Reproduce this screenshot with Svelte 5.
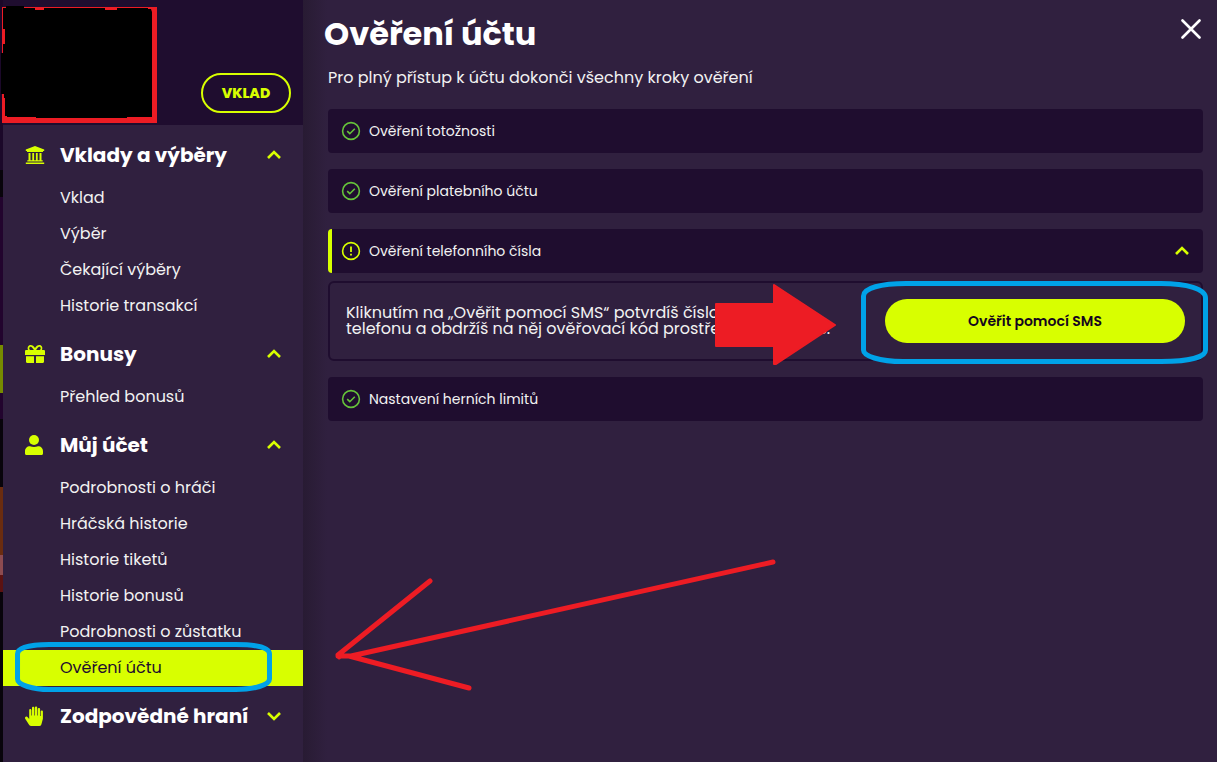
<script>
  const sections = [
    { title: 'Vklady a výběry', icon: 'bank', open: true, items: ['Vklad', 'Výběr', 'Čekající výběry', 'Historie transakcí'] },
    { title: 'Bonusy', icon: 'gift', open: true, items: ['Přehled bonusů'] },
    {
      title: 'Můj účet',
      icon: 'user',
      open: true,
      items: ['Podrobnosti o hráči', 'Hráčská historie', 'Historie tiketů', 'Historie bonusů', 'Podrobnosti o zůstatku', 'Ověření účtu']
    },
    { title: 'Zodpovědné hraní', icon: 'hand', open: false, items: [] }
  ];
  const current = 'Ověření účtu';
  const steps = [
    { title: 'Ověření totožnosti', done: true },
    { title: 'Ověření platebního účtu', done: true },
    { title: 'Ověření telefonního čísla', done: false },
    { title: 'Nastavení herních limitů', done: true }
  ];
</script>

{#snippet chevron(up)}
  <svg class="chevron" class:up width="16" height="10" viewBox="0 0 16 10" aria-hidden="true">
    <path d="M2 2l6 6 6-6" fill="none" stroke="currentColor" stroke-width="2.6" />
  </svg>
{/snippet}

{#snippet menuIcon(name)}
  <svg class="menu-icon" width="20" height="20" viewBox="0 0 20 20" fill="currentColor" aria-hidden="true">
    {#if name === 'bank'}
      <path d="M10 1l9.200 3.500v1.500h-1.200v1H2V6H.8V4.500zM3.500 8h2v7.200h9V8h2v7.200h1.200v1.300H2.300v-1.300h1.200zM7.300 8h1.800v7.200H7.300zM10.900 8h1.800v7.200h-1.800zM.8 17.400h18.400V19H.8z" />
    {:else if name === 'gift'}
      <path d="M0 7.300C0 6.500.6 6 1.300 6H3C2 3.500 3.200 1 5.600 1 7.600 1 8.800 2.300 10 4c1.200-1.700 2.400-3 4.400-3C16.800 1 18 3.500 17 6h1.700c.7 0 1.300.5 1.300 1.300V11H0zM5.600 2.800c-1.600 0-1.900 2.800-.2 3.200h3.500C7.600 4.100 6.900 2.800 5.600 2.800zm8.800 0c-1.300 0-2 1.300-3.300 3.200h3.500c1.700-.4 1.400-3.200-.2-3.200zM1 12.200h8V19H2.200C1.400 19 1 18.500 1 17.800zm10 0h8v5.600c0 .7-.4 1.200-1.200 1.200H11z" />
    {:else if name === 'user'}
      <circle cx="9" cy="5" r="5" />
      <path d="M5 11.200c2.500 1.100 5.500 1.100 8 0 3 0 5 2.100 5 5v2.300c0 .9-.6 1.500-1.500 1.500h-15C.6 20 0 19.400 0 18.500v-2.300c0-2.900 2-5 5-5z" />
    {:else}
      <path d="M4.200 19l-4-6.200c-.5-.8-.2-1.700.5-2.100.7-.4 1.500-.2 2 .5l1.500 1.900V4c0-1.500 2.200-1.500 2.200 0v5.500h.6V1.800c0-1.500 2.300-1.500 2.300 0v7.700h.6v-8c0-1.500 2.300-1.500 2.300 0v8h.6V3c0-1.500 2.300-1.500 2.300 0v7h.6V5.500c0-1.400 2.200-1.400 2.200 0v7.300l-1.400 5.200c-.3 1.300-.8 2-2 2H6.200c-.9 0-1.500-.3-2-1z" />
    {/if}
  </svg>
{/snippet}

<div class="page">
  <div class="backdrop" aria-hidden="true"></div>
  <aside>
    <header>
      <div class="redacted" aria-hidden="true">
        <svg width="155" height="116" viewBox="0 0 155 116">
          <path d="M0 0H155V116H0Z" fill="#ed1c24" />
          <path d="M4-1H22V1H33V3H42V1H103V3H115V1H146V2H149L150 5V110H125V111H34V110H5V109H3V91H2V87H-1V46H1V37H3V22H1V1H4Z" fill="#000" />
        </svg>
      </div>
      <button class="deposit">VKLAD</button>
    </header>
    <nav>
      {#each sections as section}
        <section>
          <button class="heading" aria-expanded={section.open}>
            {@render menuIcon(section.icon)}
            <span>{section.title}</span>
            {@render chevron(section.open)}
          </button>
          {#if section.open}
            <ul>
              {#each section.items as item}
                <li>
                  <a href="#menu" class:active={item === current}>{item}</a>
                  {#if item === current}
                    <svg class="nav-ring" viewBox="0 0 256 50" preserveAspectRatio="none" aria-hidden="true">
                      <path d="M2.500 12C2.500 5 18 2.500 34 2.500H220C238 2.500 253.500 5 253.500 12V37C253.500 43 238 47.500 220 47.500H34C18 47.500 2.500 43 2.500 37Z" />
                    </svg>
                  {/if}
                </li>
              {/each}
            </ul>
          {/if}
        </section>
      {/each}
    </nav>
  </aside>

  <main>
    <div class="title-row">
      <h1>Ověření účtu</h1>
      <button class="close" aria-label="Zavřít">
        <svg width="20" height="20" viewBox="0 0 20 20" aria-hidden="true">
          <path d="M1.500 1.500l17 17M18.500 1.500l-17 17" stroke="#fff" stroke-width="2.600" stroke-linecap="round" />
        </svg>
      </button>
    </div>
    <p class="intro">Pro plný přístup k účtu dokonči všechny kroky ověření</p>

    <div class="steps">
      {#each steps as step}
        <div class="step">
          <button class="step-head" class:pending={!step.done} aria-expanded={!step.done}>
            <svg class="status" width="20" height="20" viewBox="0 0 20 20" fill="none" stroke="currentColor" aria-hidden="true">
              <circle cx="10" cy="10" r="8.400" stroke-width="1.600" />
              {#if step.done}
                <path d="M6.200 10.200l2.600 2.500 5-5" stroke-width="1.600" />
              {:else}
                <path d="M10 5.500v5.500M10 12.700v1.800" stroke-width="1.800" />
              {/if}
            </svg>
            <span>{step.title}</span>
            {#if !step.done}{@render chevron(true)}{/if}
          </button>
          {#if !step.done}
            <div class="panel">
              <p>
                Kliknutím na „Ověřit pomocí SMS“ potvrdíš číslo<br />
                telefonu a obdržíš na něj ověřovací kód prostřednictvím SMS.
              </p>
              <div class="action">
                <button class="verify">Ověřit pomocí SMS</button>
                <svg class="block-arrow" width="122" height="84" viewBox="0 0 122 84" aria-hidden="true">
                  <path d="M1 21H59V2L120 42 61 81H59V63H1Z" fill="#ed1c24" stroke="#ed1c24" stroke-width="2" stroke-linejoin="round" />
                </svg>
                <svg class="action-ring" viewBox="0 0 348 84" preserveAspectRatio="none" aria-hidden="true">
                  <path d="M2.500 15C2.500 7 20 2.500 45 2.500H300C326 2.500 344.500 8 344.500 17V69C344.500 76 328 80.500 300 80.500H42C18 80.500 2.500 75 2.500 69Z" />
                </svg>
              </div>
            </div>
          {/if}
        </div>
      {/each}
    </div>

    <svg class="long-arrow" width="444" height="134" viewBox="0 0 444 134" fill="none" stroke="#ed1c24" stroke-width="5" stroke-linecap="round" stroke-linejoin="round" aria-hidden="true">
      <path d="M438 3L16 97M95 22L3 96L4 98M3 97H14L134 129" />
    </svg>
  </main>
</div>

<style>
  :global(body) {
    margin: 0;
    background: #30203f;
  }
  .page {
    display: flex;
    min-height: 100vh;
    background: #30203f;
    color: #f2f2f2;
    font: 400 16px/24px Poppins, Inter, "Open Sans", sans-serif;
  }
  .backdrop {
    flex: 0 0 3px;
    background: linear-gradient(
      #1b0829 0 170px, #08040b 170px 197px, #22042e 197px 345px, #768b00 345px 393px,
      #22042e 393px 419px, #08040b 419px 487px, #6a2c10 487px 555px, #8c4b50 555px 575px,
      #5b1212 575px 592px, #08040b 592px
    );
  }
  button {
    margin: 0;
    padding: 0;
    border: 0;
    background: none;
    color: inherit;
    font: inherit;
    text-align: left;
    cursor: pointer;
  }
  aside {
    position: relative;
    flex: 0 0 300px;
    background: #30203f;
  }
  header {
    display: flex;
    align-items: flex-end;
    justify-content: space-between;
    padding: 7px 12px 2px 0;
    background: #1f0d2f;
  }
  .redacted {
    width: 155px;
    height: 116px;
    margin-left: -1px;
  }
  .redacted svg {
    display: block;
    overflow: visible;
  }
  .deposit {
    box-sizing: border-box;
    width: 90px;
    height: 40px;
    margin-bottom: 10px;
    border: 2px solid #d8ff00;
    border-radius: 20px;
    color: #d8ff00;
    font-size: 14px;
    font-weight: 800;
    text-align: center;
  }
  nav {
    display: flex;
    flex-direction: column;
    gap: 6px;
    padding: 6px 0;
  }
  .heading {
    display: flex;
    align-items: center;
    width: 100%;
    height: 48px;
    padding: 0 21px 0 22px;
    color: #fff;
    font-size: 20px;
    font-weight: 700;
  }
  .heading span {
    flex: 1;
    white-space: nowrap;
  }
  .menu-icon {
    flex: none;
    margin-right: 15px;
    color: #d8ff00;
  }
  .chevron {
    flex: none;
    color: #d8ff00;
  }
  .chevron.up {
    transform: rotate(180deg);
  }
  ul {
    margin: 0;
    padding: 1px 0 0;
    list-style: none;
  }
  li {
    position: relative;
  }
  a {
    display: block;
    padding: 6px 0 6px 57px;
    color: inherit;
    text-decoration: none;
  }
  a.active {
    background: #d8ff00;
    color: #1f0d2f;
  }
  .nav-ring,
  .action-ring {
    position: absolute;
    fill: none;
    stroke: #00a2e8;
    stroke-width: 5px;
    pointer-events: none;
  }
  .nav-ring {
    top: -8px;
    left: 12px;
    width: 257px;
    height: 50px;
  }
  main {
    position: relative;
    flex: 1;
    min-width: 0;
    padding: 8px 14px 24px 25px;
    background: linear-gradient(90deg, #281b33, #30203f 24px);
  }
  .title-row {
    display: flex;
    justify-content: space-between;
    align-items: flex-start;
    margin-left: -4px;
  }
  h1 {
    margin: 0;
    color: #fff;
    font-size: 32px;
    line-height: 52px;
    font-weight: 700;
  }
  .close {
    display: flex;
    padding: 11px 2px;
  }
  .intro {
    margin: 6px 0 19px;
  }
  .steps {
    display: flex;
    flex-direction: column;
    gap: 16px;
  }
  .step-head {
    display: flex;
    align-items: center;
    gap: 8px;
    box-sizing: border-box;
    width: 100%;
    height: 44px;
    padding: 0 13px;
    border-radius: 4px;
    background: #1f0d2f;
    font-size: 14px;
  }
  .step-head span {
    flex: 1;
  }
  .status {
    color: #66c23a;
  }
  .pending {
    padding-left: 9px;
    border-left: 4px solid #d8ff00;
  }
  .pending .status {
    color: #d8ff00;
  }
  .panel {
    display: flex;
    align-items: center;
    justify-content: space-between;
    gap: 24px;
    margin-top: 8px;
    padding: 16px;
    border: 2px solid #1f0d2f;
    border-radius: 6px;
  }
  .panel p {
    margin: 0;
    line-height: 16px;
    white-space: nowrap;
  }
  .action {
    position: relative;
    flex: 0 0 300px;
  }
  .verify {
    width: 100%;
    height: 44px;
    border-radius: 22px;
    background: #d8ff00;
    color: #14051f;
    font-size: 14px;
    font-weight: 600;
    text-align: center;
  }
  .action-ring {
    top: -18px;
    left: -24px;
    width: 348px;
    height: 84px;
  }
  .block-arrow {
    position: absolute;
    top: -16px;
    left: -170px;
  }
  .long-arrow {
    position: absolute;
    top: 559px;
    left: 32px;
  }
</style>
